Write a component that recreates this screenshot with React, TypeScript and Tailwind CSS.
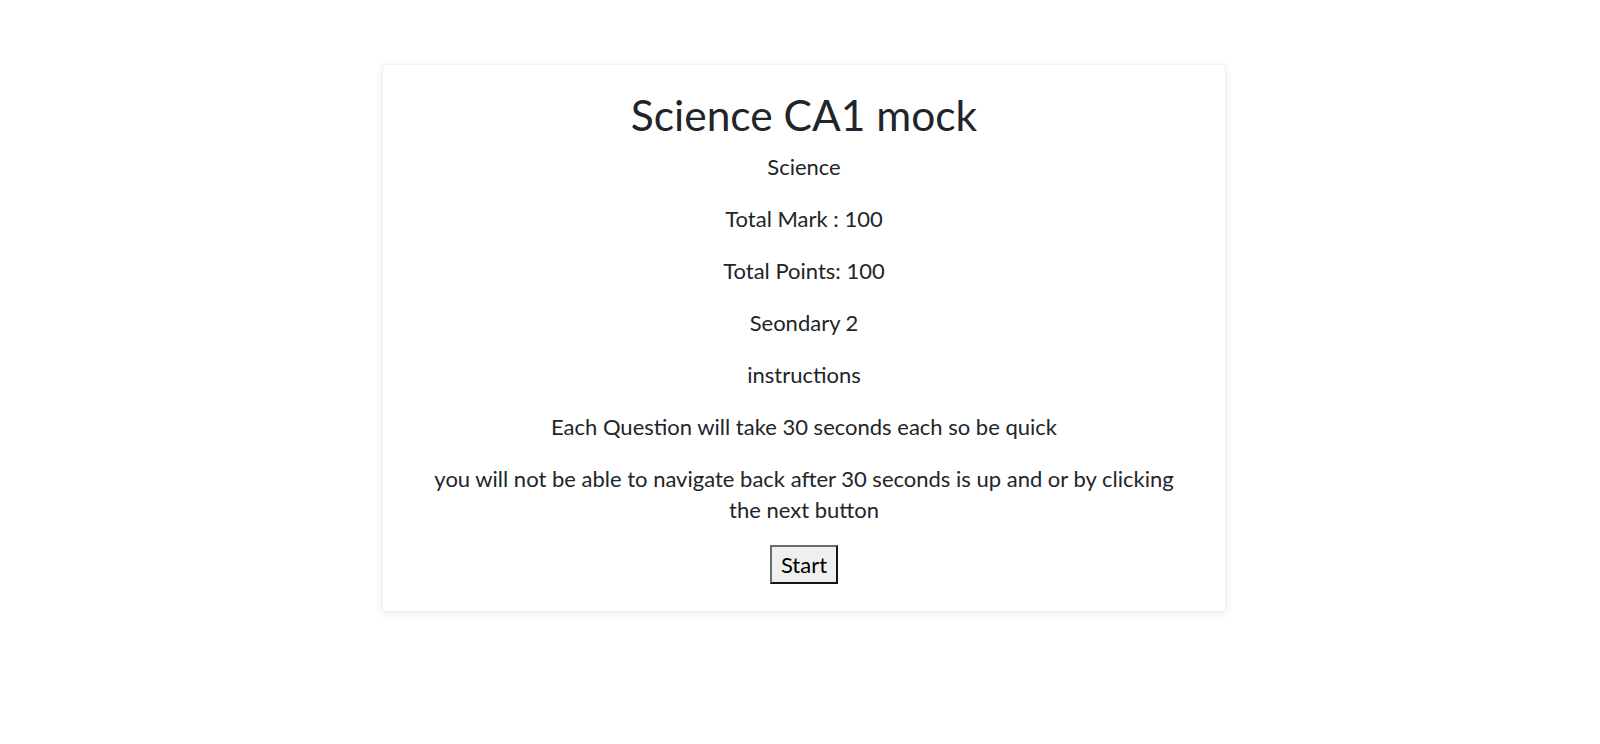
export default function App() {
  const lines = [
    "Science",
    "Total Mark : 100",
    "Total Points: 100",
    "Seondary 2",
    "instructions",
    "Each Question will take 30 seconds each so be quick",
    "you will not be able to navigate back after 30 seconds is up and or by clicking the next button",
  ];

  return (
    <div className="min-h-[744px] bg-white font-['Lato',sans-serif] text-[#212529]">
      <div className="flex justify-center pl-2 pt-16">
        <div className="w-[844px] border border-[#f0f0f0] bg-white px-[40px] pt-[26px] pb-[27px] text-center shadow-[0_2px_8px_rgba(0,0,0,0.08)]">
          <h1 className="mb-[12px] text-[42.5px] leading-[48px] font-normal">Science CA1 mock</h1>
          {lines.map((line) => (
            <p key={line} className="mb-[21px] text-[22px] leading-[31px]">
              {line}
            </p>
          ))}
          <button
            type="button"
            className="mt-[-1px] border-2 border-[#6b6b6b] bg-[#efefef] px-[9px] py-[2px] text-[22px] leading-[31px] text-black [border-style:outset]"
          >
            Start
          </button>
        </div>
      </div>
    </div>
  );
}
